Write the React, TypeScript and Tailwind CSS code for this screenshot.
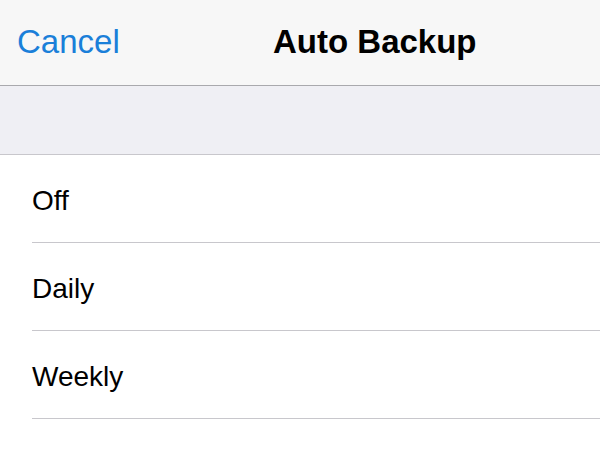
const OPTIONS = ["Off", "Daily", "Weekly", "Monthly"];

export default function App() {
  return (
    <div className="h-[450px] w-[600px] overflow-hidden bg-white font-['Liberation_Sans',Arial,sans-serif]">
      {/* Navigation bar */}
      <header className="flex h-[86px] items-center border-b border-[#a9a9ad] bg-[#f7f7f7] pb-[2px]">
        <div className="w-[273px] pl-[17px] text-[33px] leading-none text-[#1a7fd9]">
          Cancel
        </div>
        <h1 className="text-[33px] leading-none font-bold text-black">
          Auto Backup
        </h1>
      </header>

      {/* Grouped section spacer */}
      <div className="h-[69px] border-b border-[#c8c7cc] bg-[#efeff4]" />

      {/* Options list */}
      <ul>
        {OPTIONS.map((o) => (
          <li key={o} className="pl-8">
            <div className="flex h-[88px] items-center border-b border-[#c8c7cc] pt-[4px] text-[28px] leading-none text-black">
              {o}
            </div>
          </li>
        ))}
      </ul>
    </div>
  );
}
